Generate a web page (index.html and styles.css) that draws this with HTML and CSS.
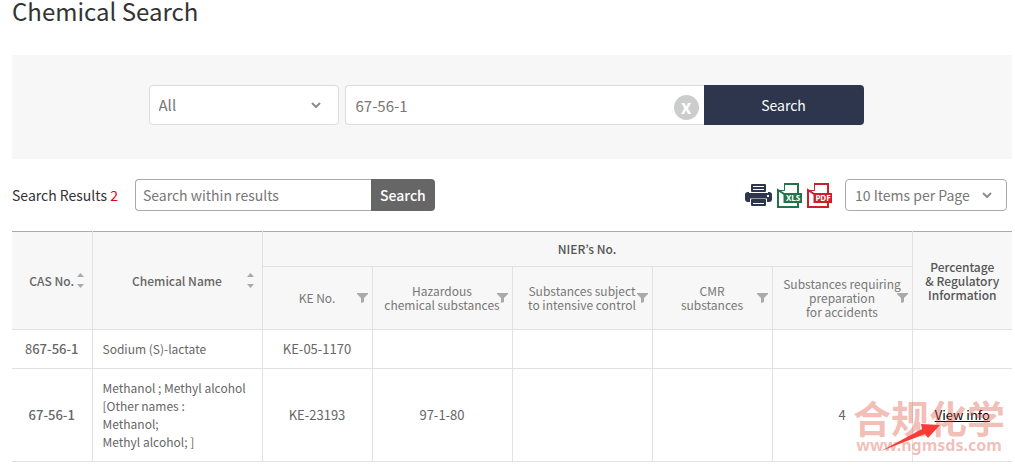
FILE: index.html
```html
<!DOCTYPE html>
<html lang="en">
<head>
    <meta charset="UTF-8">
    <meta name="viewport" content="width=device-width, initial-scale=1.0">
    <title>Chemical Search</title>
    <link rel="stylesheet" href="styles.css">
</head>
<body>
    <!-- Shared icon shapes -->
    <svg class="defs" aria-hidden="true">
        <symbol id="chevron" viewBox="0 0 10 6">
            <path d="M1 1l4 4 4-4" fill="none" stroke="#8c8c8c" stroke-width="2"/>
        </symbol>
        <symbol id="sort" viewBox="0 0 7 15">
            <path d="M0 4L3.500 0 7 4zM0 11h7l-3.500 4z" fill="#aaa"/>
        </symbol>
        <symbol id="filter" viewBox="0 0 11 10">
            <path d="M0 0h11v1L7 5v4l-3 1V5L0 1z" fill="#aaa"/>
        </symbol>
        <symbol id="file" viewBox="0 0 25 25">
            <path d="M7 1h14v10M21 20v4H1V7z" fill="none" stroke="currentColor" stroke-width="2"/>
            <path d="M2 7.500h5.500V2" fill="none" stroke="currentColor"/>
            <path d="M6.500 10H25v10H6.500z" fill="currentColor"/>
        </symbol>
    </svg>

    <main class="container">
        <h1>Chemical Search</h1>

        <form class="search-box">
            <div class="select-wrap search-type">
                <select aria-label="Search type">
                    <option>All</option>
                    <option>CAS No.</option>
                    <option>Chemical Name</option>
                </select>
                <svg class="chevron"><use href="#chevron"/></svg>
            </div>
            <div class="keyword">
                <input type="text" value="67-56-1" aria-label="Keyword">
                <button type="button" class="clear" aria-label="Clear">x</button>
            </div>
            <button type="submit" class="search-btn">Search</button>
        </form>

        <div class="toolbar">
            <p class="count">Search Results <span>2</span></p>
            <form class="within">
                <input type="text" placeholder="Search within results" aria-label="Search within results">
                <button type="submit">Search</button>
            </form>
            <div class="exports">
                <button type="button" aria-label="Print">
                    <svg width="27" height="24" viewBox="0 0 27 24">
                        <rect x="6" y="1" width="15" height="8" rx="1" fill="#2d364c"/>
                        <path d="M8 3.500h11M8 6.500h11" stroke="#fff"/>
                        <rect y="9" width="27" height="10" rx="3" fill="#2d364c"/>
                        <path d="M4 9.500h19" stroke="#fff"/>
                        <path d="M22 13h2" stroke="#fff" stroke-width="2"/>
                        <path d="M5 15.500h17V19H5z" fill="#fff"/>
                        <rect x="6" y="16" width="15" height="7" rx="1" fill="#2d364c"/>
                        <path d="M8 20.500h11" stroke="#fff"/>
                    </svg>
                </button>
                <button type="button" class="xls" aria-label="Download XLS">
                    <svg width="25" height="25" viewBox="0 0 25 25">
                        <use href="#file"/>
                        <text x="16" y="18" class="file-type">XLS</text>
                    </svg>
                </button>
                <button type="button" class="pdf" aria-label="Download PDF">
                    <svg width="25" height="25" viewBox="0 0 25 25">
                        <use href="#file"/>
                        <text x="16" y="18" class="file-type">PDF</text>
                    </svg>
                </button>
            </div>
            <div class="select-wrap page-size">
                <select aria-label="Items per page">
                    <option>10 Items per Page</option>
                    <option>20 Items per Page</option>
                </select>
                <svg class="chevron"><use href="#chevron"/></svg>
            </div>
        </div>

        <div class="results">
            <table>
                <colgroup>
                    <col class="w8"><col class="w17"><col class="w11"><col class="w14"><col class="w14"><col class="w12"><col class="w14"><col class="w10">
                </colgroup>
                <thead>
                    <tr>
                        <th rowspan="2">CAS No.<svg class="sort"><use href="#sort"/></svg></th>
                        <th rowspan="2">Chemical Name<svg class="sort"><use href="#sort"/></svg></th>
                        <th colspan="5" class="group">NIER’s No.</th>
                        <th rowspan="2" class="info">Percentage<br>&amp; Regulatory<br>Information</th>
                    </tr>
                    <tr class="sub">
                        <th>KE No.<svg class="filter"><use href="#filter"/></svg></th>
                        <th>Hazardous<br>chemical substances<svg class="filter"><use href="#filter"/></svg></th>
                        <th>Substances subject<br>to intensive control<svg class="filter"><use href="#filter"/></svg></th>
                        <th>CMR<br>substances<svg class="filter"><use href="#filter"/></svg></th>
                        <th>Substances requiring<br>preparation<br>for accidents<svg class="filter"><use href="#filter"/></svg></th>
                    </tr>
                </thead>
                <tbody>
                    <tr>
                        <td>8<b>67-56-1</b></td>
                        <td class="name">Sodium (S)-lactate</td>
                        <td>KE-05-1170</td>
                        <td></td>
                        <td></td>
                        <td></td>
                        <td></td>
                        <td></td>
                    </tr>
                    <tr>
                        <td><b>67-56-1</b></td>
                        <td class="name">Methanol ; Methyl alcohol<br>[Other names :<br>Methanol;<br>Methyl alcohol; ]</td>
                        <td>KE-23193</td>
                        <td>97-1-80</td>
                        <td></td>
                        <td></td>
                        <td>4</td>
                        <td><a href="#">View info</a></td>
                    </tr>
                </tbody>
            </table>

            <!-- Watermark and pointer drawn over the last row -->
            <div class="watermark">
                <span class="mark-name" lang="zh">合规化学</span>
                <span class="mark-site">www.ngmsds.com</span>
            </div>
            <svg class="pointer" width="60" height="28" viewBox="0 0 60 28">
                <path d="M1 27L42 5 41 0l19 1-12 13-3-4z" fill="#fb3a35"/>
            </svg>
        </div>
    </main>
</body>
</html>
```
FILE: styles.css
```css
* {
    box-sizing: border-box;
}

body {
    margin: 0;
    background: #fff;
    color: #333;
    font-family: "Noto Sans CJK KR", "Noto Sans", sans-serif;
    font-size: 14px;
    line-height: 20px;
}

.defs {
    display: none;
}

.container {
    padding: 0 3px 0 12px;
}

h1 {
    margin: 0 0 34px;
    font-size: 24px;
    font-weight: 400;
    line-height: 21px;
}

input,
select,
button {
    margin: 0;
    font: inherit;
}

button {
    border: none;
    cursor: pointer;
}

/* Drop-downs */
.select-wrap {
    position: relative;
}

.select-wrap select {
    width: 100%;
    height: 100%;
    padding: 0 9px;
    border: 1px solid #ddd;
    border-radius: 4px;
    background: #fff;
    color: #777;
    appearance: none;
}

.chevron {
    position: absolute;
    top: 50%;
    right: 18px;
    width: 10px;
    height: 6px;
    margin-top: -3px;
    pointer-events: none;
}

/* Search form */
.search-box {
    display: flex;
    justify-content: center;
    padding: 30px 12px 34px 0;
    background: #f7f7f7;
}

.search-type {
    width: 190px;
    height: 40px;
    margin-right: 6px;
}

.search-type select {
    font-size: 15px;
}

.keyword {
    position: relative;
    width: 359px;
    height: 40px;
}

.keyword input {
    width: 100%;
    height: 100%;
    padding: 0 40px 0 10px;
    border: 1px solid #ddd;
    border-right: none;
    border-radius: 4px 0 0 4px;
    color: #777;
    font-size: 15px;
}

.clear {
    position: absolute;
    top: 10px;
    right: 5px;
    width: 25px;
    height: 25px;
    padding: 0 0 3px;
    border-radius: 50%;
    background: #ccc;
    color: #fff;
    font-size: 19px;
    font-weight: 700;
    line-height: 20px;
}

.search-btn {
    width: 160px;
    height: 40px;
    border-radius: 0 4px 4px 0;
    background: #2d364c;
    color: #fff;
}

/* Toolbar above the table */
.toolbar {
    display: flex;
    align-items: center;
    padding: 20px 5px 20px 0;
}

.count {
    margin: 0 17px 0 0;
}

.count span {
    color: #e60012;
}

.within {
    display: flex;
    width: 300px;
    height: 32px;
}

.within input {
    flex: 1;
    min-width: 0;
    padding: 0 7px;
    border: 1px solid #aaa;
    border-right: none;
    border-radius: 4px 0 0 4px;
}

.within input::placeholder {
    color: #777;
}

.within button {
    width: 64px;
    padding: 0;
    border-radius: 0 4px 4px 0;
    background: #666;
    color: #fff;
    font-weight: 500;
}

.exports {
    display: flex;
    align-items: center;
    gap: 5px;
    margin: 0 13px 0 auto;
}

.exports button {
    padding: 0;
    background: none;
}

.exports svg {
    display: block;
}

.exports .xls {
    color: #20744a;
}

.exports .pdf {
    color: #cb1f2a;
}

.file-type {
    fill: #fff;
    font: 700 8px "Noto Sans", sans-serif;
    text-anchor: middle;
}

.page-size {
    width: 162px;
    height: 32px;
}

.page-size select {
    border-color: #aaa;
}

.page-size .chevron {
    right: 15px;
}

/* Results table */
.results {
    position: relative;
}

table {
    width: 100%;
    border-collapse: collapse;
    table-layout: fixed;
    font-size: 13px;
    line-height: 18px;
    color: #666;
}

.w8 { width: 8%; }
.w10 { width: 10%; }
.w11 { width: 11%; }
.w12 { width: 12%; }
.w14 { width: 14%; }
.w17 { width: 17%; }

th,
td {
    padding: 10px 0;
    border: 1px solid #e1e1e1;
    text-align: center;
}

thead tr:first-child th:first-child,
td:first-child {
    border-left: none;
}

td:last-child,
.info {
    border-right: none;
}

th {
    position: relative;
    background: #f7f7f7;
    font-size: 12px;
    font-weight: 500;
    line-height: 14px;
    white-space: nowrap;
}

thead tr:first-child th {
    border-top-color: #aaa;
}

.sub th {
    color: #777;
    font-weight: 400;
}

.group,
.info {
    color: #555;
}

.name {
    padding-left: 10px;
    font-size: 12px;
    text-align: left;
}

td b {
    font-weight: 500;
}

td a {
    color: #000;
}

.sort {
    position: absolute;
    top: 50%;
    right: 8px;
    width: 7px;
    height: 15px;
    margin-top: -8px;
}

.filter {
    position: absolute;
    top: 50%;
    right: 4px;
    width: 11px;
    height: 10px;
    margin-top: -5px;
}

/* Watermark */
.watermark {
    position: absolute;
    right: 7px;
    bottom: 9px;
    display: flex;
    flex-direction: column;
    align-items: center;
    color: rgba(221, 83, 66, 0.38);
    font-weight: 700;
    pointer-events: none;
}

.mark-name {
    font-family: "Noto Sans CJK SC", sans-serif;
    font-size: 38px;
    line-height: 40px;
}

.mark-site {
    font-family: "Noto Sans", sans-serif;
    font-size: 16px;
    line-height: 16px;
}

.pointer {
    position: absolute;
    right: 72px;
    bottom: 10px;
    pointer-events: none;
}
```
